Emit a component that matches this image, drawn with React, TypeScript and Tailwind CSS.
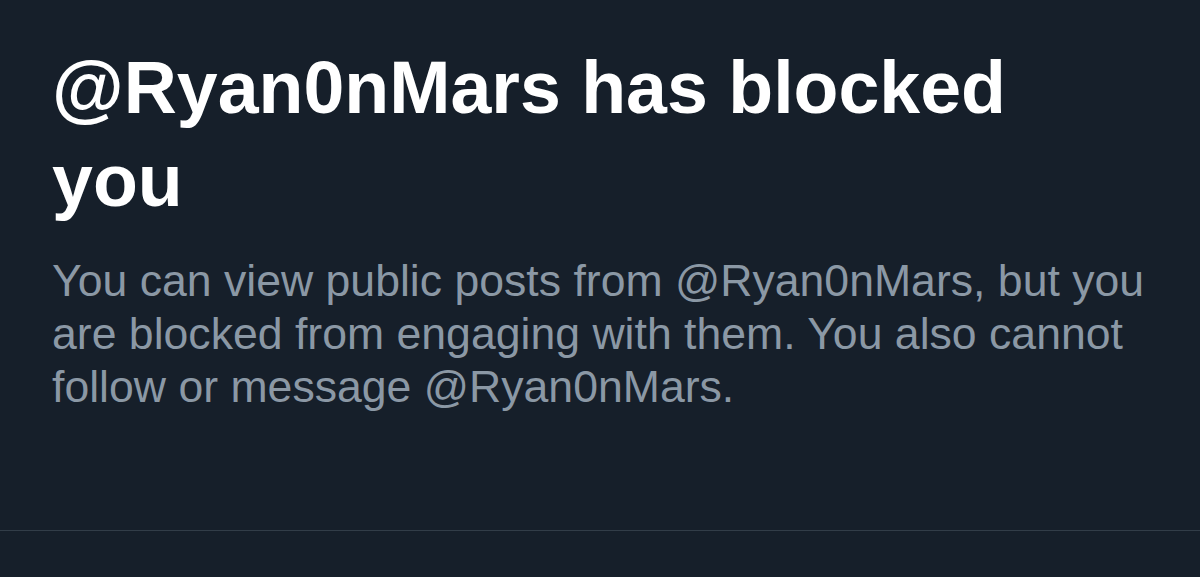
export default function App() {
  return (
    <div className="w-[1200px] h-[577px] bg-[#161f2a] flex flex-col font-['Liberation_Sans',Arial,sans-serif] overflow-hidden">
      <div className="pl-[52px] pr-[40px] pt-[41px]">
        <h1 className="max-w-[1000px] text-[73.5px] leading-[93px] font-bold text-white">
          @Ryan0nMars has blocked you
        </h1>
        <p className="mt-[27px] text-[44.6px] leading-[53px] text-[#8b98a5]">
          You can view public posts from @Ryan0nMars, but you are blocked from engaging with them. You also cannot follow or
          message @Ryan0nMars.
        </p>
      </div>
      <div className="mt-auto mb-[46px] h-px bg-[#323d48]" />
    </div>
  );
}
